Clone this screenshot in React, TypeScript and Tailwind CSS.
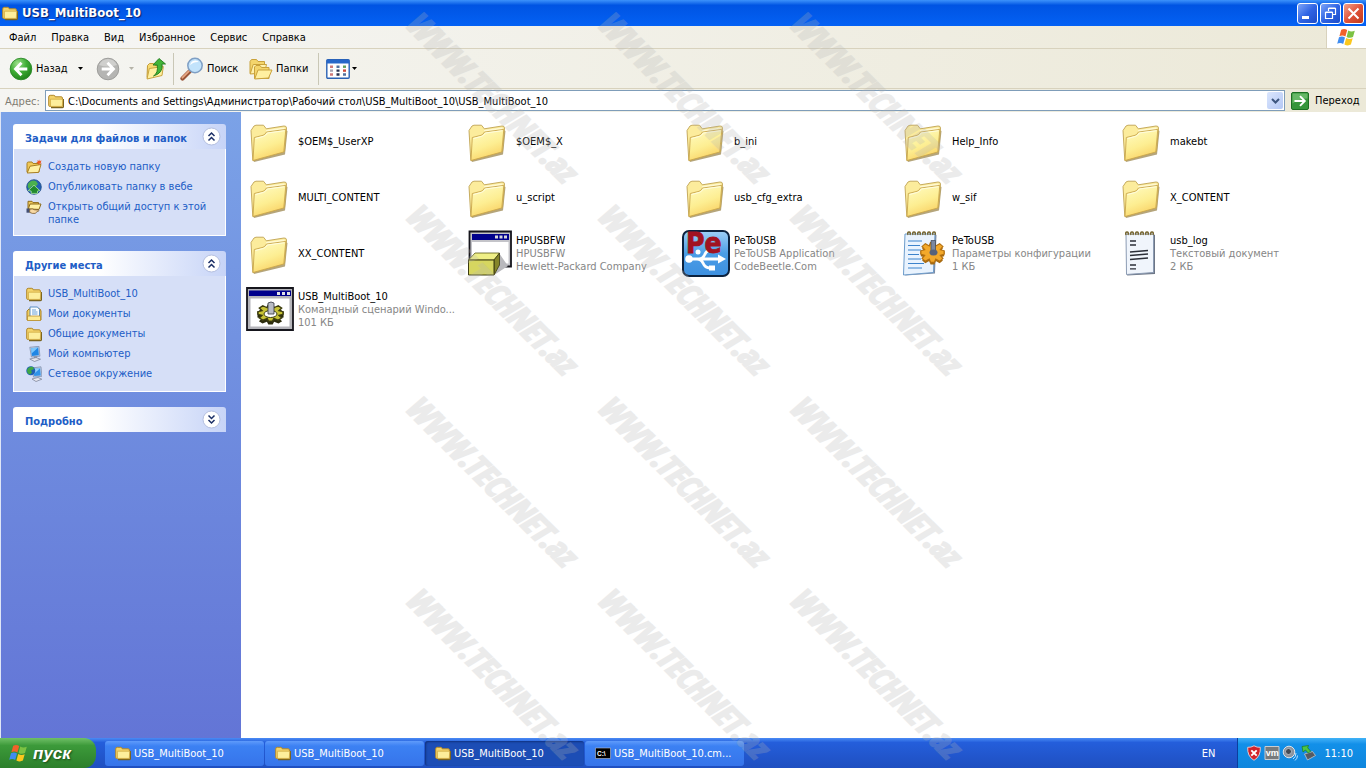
import React from "react";
import clsx from "clsx";

type IconProps = { className?: string };

const FolderLarge = () => (
  <svg viewBox="0 0 48 48" className="size-12 shrink-0" aria-hidden="true">
    <defs>
      <linearGradient id="folderFront" x1="0.2" y1="0" x2="0.6" y2="1">
        <stop offset="0" stopColor="#fffbc0" />
        <stop offset="0.55" stopColor="#fdee92" />
        <stop offset="1" stopColor="#f9d062" />
      </linearGradient>
    </defs>
    <path d="M8 45 L39 37.5 L41.5 14 L39.5 13 L37.5 35 L7 43Z" fill="#8d7434" opacity="0.65" />
    <path
      d="M5 13.5 L8 9 L10 8.2 L17.5 8.2 L20.3 11.8 L38 9 Q40.5 8.8 40.5 11 L38.5 34.5 L6.8 43.5Z"
      fill="#fcec9c"
      stroke="#bfa352"
      strokeWidth="0.9"
      strokeLinejoin="round"
    />
    <path d="M20 13 L38.5 10.5 L38.5 13 L21 15.5Z" fill="#fff9d2" />
    <path
      d="M8.3 20.5 L17 18.3 Q19 17.8 20.5 15 L39.8 12.4 L37.8 35 L7 43.5Z"
      fill="url(#folderFront)"
      stroke="#c9a64c"
      strokeWidth="0.9"
      strokeLinejoin="round"
    />
    <path d="M9.5 21.5 L17.5 19.4 Q20 18.5 21.3 16 L38.5 13.7" fill="none" stroke="#fffde0" strokeWidth="1" />
  </svg>
);

const FolderSmall = ({ className }: IconProps) => (
  <svg viewBox="0 0 16 16" className={clsx("size-4 shrink-0", className)} aria-hidden="true">
    <path d="M3 14.6h11.2q1.3 0 1.3-1.4V6" fill="none" stroke="#7a6420" strokeWidth="1.2" />
    <path
      d="M.7 12.5V4Q.7 2.3 2.2 2.3h3.6Q7 2.3 7.2 3.8h6q1.2 0 1.2 1.2v8.4H1.8Q.7 13.4.7 12.5Z"
      fill="#f3d36a"
      stroke="#b0872a"
    />
    <path d="M2.4 6.2h12.3l-.4 7.2H2.5Z" fill="#fdee9b" stroke="#cda53b" strokeWidth="0.7" />
  </svg>
);

const NewFolderIcon = () => (
  <svg viewBox="0 0 16 16" className="size-4 shrink-0" aria-hidden="true">
    <path d="M1 13V4.5Q1 3 2.5 3H6l1 1.5h6V13Z" fill="#f0c858" stroke="#a87f22" />
    <path d="M1.2 14 4 7.2 15 5.5 12.6 13.4Z" fill="#fff0a3" stroke="#a87f22" strokeLinejoin="round" />
    <path d="m13 .3.7 1.7 1.9-.6-.9 1.8 1 1.5-2-.2-1 1.4-.7-1.7-1.9-.4 1.6-1.1-.2-1.8 1.4 1Z" fill="#ee5a26" />
  </svg>
);

const WebPublishIcon = () => (
  <svg viewBox="0 0 16 16" className="size-4 shrink-0" aria-hidden="true">
    <circle cx="8" cy="8" r="7.3" fill="#2361b5" stroke="#1d4a82" strokeWidth="0.8" />
    <path d="M2 5q3-5 8-3l2 3-3 3-3-1-3 3q-2-2-1-5Z" fill="#4bb04d" />
    <path d="m8 6.2 5.8 5.4-2.3.4v2.4H5.2V12l-3-.4Z" fill="#218a2d" stroke="#aee6a0" strokeWidth="0.8" />
  </svg>
);

const ShareFolderIcon = () => (
  <svg viewBox="0 0 16 16" className="size-4 shrink-0" aria-hidden="true">
    <path d="M2 10V2.3h4l1 1.3h5.5V10Z" fill="#f0c858" stroke="#8c6b1d" />
    <path d="M2.3 10 4 5h11l-2 5.4Z" fill="#fff0a3" stroke="#8c6b1d" strokeLinejoin="round" />
    <path d="M.5 9.5h3.2v4.2H.5z" fill="#434f73" />
    <path d="M3.7 10.2q3-.8 5 .6l3.6.2q1 .6 0 1.4l-1.1.2-2 1.8H6.3l-2.6-1Z" fill="#f8d9a4" stroke="#6b4a1a" strokeWidth="0.7" />
  </svg>
);

const DocumentsIcon = () => (
  <svg viewBox="0 0 16 16" className="size-4 shrink-0" aria-hidden="true">
    <path d="M1 14V5l2-2h11l1 2v9Z" fill="#f0cd60" stroke="#a87f22" />
    <path d="M4 11V1h7.5L13.5 3.5V11Z" fill="#fafdff" stroke="#4d83bb" strokeWidth="0.9" />
    <path d="M6 4h4M6 6h5.5M6 8h5.5" stroke="#69a0d6" />
    <path d="M1.5 10h13v4.5h-13z" fill="#fdeb94" stroke="#b78d2b" strokeWidth="0.8" />
  </svg>
);

const ComputerIcon = () => (
  <svg viewBox="0 0 16 16" className="size-4 shrink-0" aria-hidden="true">
    <path d="m3.8 1.3 9.2-1 .9 9.9-8.5.8Z" fill="#c6d2e6" stroke="#7786a5" strokeWidth="0.7" />
    <path d="m4.9 2.3 7.3-.8.7 7.8-7 .7Z" fill="#1f86e4" />
    <path d="m4.9 2.3 7.3-.8-6.6 6Z" fill="#7cc6fb" />
    <path d="m7.8 10.5 3-.2.3 1.7H8Z" fill="#8790a3" />
    <path d="m3.8 13 6.2-1.4 4.5 1.6-6 2.3Z" fill="#e3e4ec" stroke="#737b90" strokeWidth="0.7" />
  </svg>
);

const NetworkIcon = () => (
  <svg viewBox="0 0 16 16" className="size-4 shrink-0" aria-hidden="true">
    <path d="m6 2 9-1.2.9 9.5-8.4.8Z" fill="#c6d2e6" stroke="#7786a5" strokeWidth="0.7" />
    <path d="m7.2 3 6.9-.8.7 7.2-6.6.6Z" fill="#2f92e9" />
    <path d="m7.2 3 6.9-.8-6 5.5Z" fill="#93d2fb" />
    <circle cx="4.8" cy="4.8" r="4.5" fill="#1f5fb4" />
    <path d="M1 4q2-4 6-3l1 2-3 1.5 1 2-2 2Q1 8 1 4Z" fill="#3fa746" />
    <path d="m6 13 6-1.5 3.8 1.7-5.8 2.3Z" fill="#e9e8f0" stroke="#737b90" strokeWidth="0.7" />
  </svg>
);

const WindowsFlag = ({ className }: IconProps) => (
  <svg viewBox="0 0 20 18" className={className} aria-hidden="true">
    <path d="M4.2 1.8q3-1.8 6 .2L8.4 8.4q-3-1.8-6-.2Z" fill="#f2622a" />
    <path d="M11.2 2.6q3 1.8 6.6.2L16 9q-3 1.6-6.4-.1Z" fill="#7cc243" />
    <path d="M2 9.3q3-1.6 6 .2l-1.8 6.4q-3-1.8-6-.2Z" fill="#3f8cf0" />
    <path d="M9.2 10q3.2 1.8 6.5.2L13.9 16.6q-3.2 1.7-6.5-.2Z" fill="#fbc71d" />
  </svg>
);

const BackIcon = () => (
  <svg viewBox="0 0 24 24" className="size-6" aria-hidden="true">
    <defs>
      <radialGradient id="backFill" cx="0.35" cy="0.25" r="0.8">
        <stop offset="0" stopColor="#9ee08c" />
        <stop offset="0.5" stopColor="#3fae35" />
        <stop offset="1" stopColor="#1f8119" />
      </radialGradient>
    </defs>
    <circle cx="12" cy="12" r="10.8" fill="url(#backFill)" stroke="#2b8a28" strokeWidth="0.9" />
    <path d="M12.5 5.8 6.5 12l6 6.2M7 12h11.3" fill="none" stroke="#fff" strokeWidth="2.8" />
  </svg>
);

const ForwardIcon = () => (
  <svg viewBox="0 0 24 24" className="size-6" aria-hidden="true">
    <circle cx="12" cy="12" r="10.8" fill="#b5b5b3" stroke="#999996" strokeWidth="0.9" />
    <path d="M3 8q3-6 9-6t9 6q-9 3-18 0Z" fill="#cfcfcd" />
    <path d="m11.5 5.8 6 6.2-6 6.2M17 12H5.7" fill="none" stroke="#fff" strokeWidth="2.8" />
  </svg>
);

const UpIcon = () => (
  <svg viewBox="0 0 24 24" className="size-6" aria-hidden="true">
    <path d="m3 20.5.5-12 2-2h4l1.5 2 7-.5-1 9Z" fill="#f6d970" stroke="#c29b38" strokeLinejoin="round" />
    <path d="m3 22 2.3-10.5 14-2-1.3 9Z" fill="#fff0a0" stroke="#c9a440" strokeLinejoin="round" />
    <path d="M9.5 19q5-3 3.7-11H9l6-6.5L21.5 7H18q1.5 9-8.5 12Z" fill="#43b438" stroke="#207a1d" strokeWidth="0.9" />
  </svg>
);

const SearchIcon = () => (
  <svg viewBox="0 0 24 24" className="size-6" aria-hidden="true">
    <path d="m2.5 21.5 7-7" stroke="#9a5538" strokeWidth="4.2" strokeLinecap="round" />
    <path d="m2.4 20.7 6.5-6.5" stroke="#e7a884" strokeWidth="1.8" strokeLinecap="round" />
    <circle cx="15" cy="8.5" r="7.2" fill="#c2e3fb" stroke="#7f9fc4" strokeWidth="1.5" />
    <path d="M10.2 8.2q.6-4.4 5-4.7 2.5 0 3.5 1.5-5.5-.2-8.5 3.2Z" fill="#fff" />
  </svg>
);

const FoldersIcon = () => (
  <svg viewBox="0 0 24 24" className="size-6" aria-hidden="true">
    <path d="M1 16.5V4.5L2.5 2.5H7.5l1.5 2h6.5V15Z" fill="#f4d56c" stroke="#c9a23c" />
    <path d="m1.2 17 3-9.5H17.5l-2 8.5Z" fill="#fff2ae" stroke="#c9a23c" strokeLinejoin="round" />
    <path d="M5.5 21.5V10l1.5-1.5h4l1.5 2h7.5v11Z" fill="#f4d56c" stroke="#c9a23c" />
    <path d="M5.7 22 9 13h14L19.5 21Z" fill="#fff0a0" stroke="#c9a23c" strokeLinejoin="round" />
  </svg>
);

const ViewsIcon = () => (
  <svg viewBox="0 0 24 20" className="h-5 w-6" aria-hidden="true">
    <rect x="0.8" y="0.8" width="22.4" height="18.4" rx="1" fill="#fff" stroke="#2b62b4" strokeWidth="1.4" />
    <path d="M.8.8h22.4v3.7H.8z" fill="#2767c9" />
    <path d="M4 6.5h3v2.4H4zM4 14.3h3v2.4H4z" fill="#d07a7a" />
    <path d="M10.5 6.5h3v2.4h-3zM17 14.3h3v2.4h-3z" fill="#52719e" />
    <path d="M17 6.5h3v2.4h-3z" fill="#62a05a" />
    <path d="M4 10.4h3v2.4H4z" fill="#a8a4b4" />
    <path d="M10.5 10.4h3v2.4h-3zM10.5 14.3h3v2.4h-3z" fill="#27304f" />
    <path d="M17 10.4h3v2.4h-3z" fill="#cc4b3c" />
  </svg>
);

const Caret = ({ className }: IconProps) => (
  <svg viewBox="0 0 5 3" className={clsx("h-[3px] w-[5px]", className)} aria-hidden="true">
    <path d="M0 0h5L2.5 3Z" fill="currentColor" />
  </svg>
);

const GoIcon = () => (
  <svg viewBox="0 0 18 18" className="size-[18px]" aria-hidden="true">
    <rect x="0.5" y="0.5" width="17" height="17" rx="1.5" fill="#36953b" stroke="#1c7022" />
    <path d="M1.5 1.5h15v5q-8 0-15 5Z" fill="#66b866" />
    <path d="M9 4.2 13.8 9 9 13.8M13 9H3.5" fill="none" stroke="#fff" strokeWidth="1.9" />
  </svg>
);

// teeth shared by the batch and config icons
const GEAR_TEETH =
  "M-1.5-9h3l1 3 3-2 2.5 2.5-2 3 3 1v3l-3 1 2 3-2.5 2.5-3-2-1 3h-3l-1-3-3 2L-8 5.5l2-3-3-1v-3l3-1-2-3L-5.5-8l3 2Z";

const InstallerIcon = () => (
  <svg viewBox="0 0 48 48" className="size-12 shrink-0" aria-hidden="true">
    <path d="M5.5 2.5h41.5v35H5.5z" fill="#c4c4c9" stroke="#15151c" strokeWidth="1.8" />
    <path d="M8 5h37v6H8z" fill="#00008c" />
    <path d="M31 6.5h3v3h-3zM35.5 6.5h3v3h-3zM40 6.5h3v3h-3z" fill="#d6d6da" />
    <path d="M8 13h36.5v21.5H8z" fill="#fff" />
    <path d="m30 46 5-11V24l9 13Z" fill="#b9b9bd" />
    <path d="M4.5 31 11 24h24.5L30 31Z" fill="#efef86" stroke="#5c5c16" strokeWidth="0.8" />
    <path d="M30 31 35.5 24v12L30 46Z" fill="#85852a" stroke="#3b3b10" strokeWidth="0.8" />
    <path d="M4.5 31H30v15H4.5z" fill="#d6d660" stroke="#3b3b10" />
  </svg>
);

const BatchIcon = () => (
  <svg viewBox="0 0 48 48" className="size-12 shrink-0" aria-hidden="true">
    <path d="M1 3h46v42H1z" fill="#b5b5ba" stroke="#15151c" strokeWidth="1.8" />
    <path d="M3 5.5h42v5.500H3z" fill="#00008c" />
    <path d="M31 7h3v3h-3zM36 7h3v3h-3zM41 7h3v3h-3z" fill="#e2e2e8" />
    <path d="M4.5 13.5h39v28h-39z" fill="#fff" />
    <g transform="translate(24.5 28)">
      <path d={GEAR_TEETH} fill="#2d2d0d" transform="translate(0 3) scale(1.45 0.95)" />
      <path d={GEAR_TEETH} fill="#c8c335" stroke="#3e3e10" strokeWidth="1.2" transform="scale(1.4 0.9)" />
      <ellipse cx="0" cy="1" rx="6.5" ry="3.5" fill="#fff" stroke="#3e3e10" />
      <path d="M-2.5-10q3-2 6 0V1h-6z" fill="#b9bcc4" stroke="#33363f" strokeWidth="0.8" />
    </g>
  </svg>
);

const PeToUsbIcon = () => (
  <svg viewBox="0 0 48 48" className="size-12 shrink-0" aria-hidden="true">
    <defs>
      <linearGradient id="peFill" x1="0" y1="0" x2="0" y2="1">
        <stop offset="0" stopColor="#9fd0f7" />
        <stop offset="0.5" stopColor="#4b9de6" />
        <stop offset="1" stopColor="#3d90e0" />
      </linearGradient>
    </defs>
    <rect x="1" y="2" width="46" height="45" rx="6" fill="url(#peFill)" stroke="#0c2340" strokeWidth="2" />
    <path d="M5 30h34M15 30q4 0 6 4 2 5 7 5h3M17 30q4 0 6-5 2-4 6-4" fill="none" stroke="#fff" strokeWidth="2.8" />
    <path d="m36 25.5 8 4.5-8 4.5Z" fill="#fff" />
    <circle cx="7" cy="30" r="3.8" fill="#fff" />
    <circle cx="16" cy="23" r="2.5" fill="#fff" />
    <rect x="27" y="36.5" width="6" height="5" fill="#fff" />
    <text x="4" y="24" fontFamily="DejaVu Sans Condensed" fontWeight="700" fontSize="28" fill="#a11221" stroke="#a11221" strokeWidth="0.8">
      Pe
    </text>
  </svg>
);

const SpiralTop = () => (
  <path
    d="M8 6q-1-3 1-3t1 3M13 6q-1-3 1-3t1 3M18 6q-1-3 1-3t1 3M23 6q-1-3 1-3t1 3M28 6q-1-3 1-3t1 3M33 6q-1-3 1-3t1 3"
    fill="none"
    stroke="#76652f"
    strokeWidth="1.4"
  />
);

const ConfigIcon = () => (
  <svg viewBox="0 0 48 48" className="size-12 shrink-0" aria-hidden="true">
    <path d="M5 46.5 35 44.5 36.5 6 35 5Z" fill="#7d8ba3" />
    <path d="M5 5h30L33.5 43.5 3.5 46Z" fill="#e9f3fe" stroke="#6d9ccb" />
    <path d="M8 12h14M8 16.5h12M8 21h13M8 25.5h11M8 30h13M8 34.5h16M8 39h14" stroke="#3c83cc" strokeWidth="1.2" />
    <SpiralTop />
    <g transform="translate(32.5 23.5)">
      <path d={GEAR_TEETH} fill="#a56a12" transform="translate(0 2) scale(1.3 1.1)" />
      <path d={GEAR_TEETH} fill="#f3a92b" stroke="#b4700f" transform="scale(1.3 1.1)" />
      <path d="M-1.5-12h4.5v11h-4.5z" fill="#7b88a0" stroke="#3e4658" strokeWidth="0.7" />
      <ellipse cx="1" cy="0" rx="4" ry="3" fill="#57627a" />
    </g>
  </svg>
);

const TextIcon = () => (
  <svg viewBox="0 0 48 48" className="size-12 shrink-0" aria-hidden="true">
    <path d="M9 46.5 37 45V6l-2-1Z" fill="#6d7686" />
    <path d="M8 5h27.5v38.5L8.5 45.5Z" fill="#f0f5fc" stroke="#8b9bb3" />
    <path d="M12 12h6M12 16h6M12 23l18-1.5M12 26.5l18-1.5M12 30.5l18-1.5M12 36h6M12 39.8h6" stroke="#2b2f38" strokeWidth="1.3" />
    <SpiralTop />
  </svg>
);

const FILES = [
  { name: "$OEM$_UserXP" },
  { name: "$OEM$_X" },
  { name: "b_ini" },
  { name: "Help_Info" },
  { name: "makebt" },
  { name: "MULTI_CONTENT" },
  { name: "u_script" },
  { name: "usb_cfg_extra" },
  { name: "w_sif" },
  { name: "X_CONTENT" },
  { name: "XX_CONTENT" },
  { name: "HPUSBFW", info: ["HPUSBFW", "Hewlett-Packard Company"], icon: InstallerIcon },
  { name: "PeToUSB", info: ["PeToUSB Application", "CodeBeetle.Com"], icon: PeToUsbIcon },
  { name: "PeToUSB", info: ["Параметры конфигурации", "1 КБ"], icon: ConfigIcon },
  { name: "usb_log", info: ["Текстовый документ", "2 КБ"], icon: TextIcon },
  { name: "USB_MultiBoot_10", info: ["Командный сценарий Windo...", "101 КБ"], icon: BatchIcon },
];

const TASKS = [
  { label: "Создать новую папку", icon: NewFolderIcon },
  { label: "Опубликовать папку в вебе", icon: WebPublishIcon },
  { label: "Открыть общий доступ к этой папке", icon: ShareFolderIcon },
];

const PLACES = [
  { label: "USB_MultiBoot_10", icon: FolderSmall },
  { label: "Мои документы", icon: DocumentsIcon },
  { label: "Общие документы", icon: FolderSmall },
  { label: "Мой компьютер", icon: ComputerIcon },
  { label: "Сетевое окружение", icon: NetworkIcon },
];

const MENU = ["Файл", "Правка", "Вид", "Избранное", "Сервис", "Справка"];

const WINDOWS = [
  { label: "USB_MultiBoot_10" },
  { label: "USB_MultiBoot_10" },
  { label: "USB_MultiBoot_10", active: true },
  { label: "USB_MultiBoot_10.cm...", console: true },
];

type PanelItem = { label: string; icon: React.ComponentType };

const Panel = ({ title, items }: { title: string; items?: PanelItem[] }) => (
  <section>
    <button
      type="button"
      className="flex h-[25px] w-full items-center justify-between rounded-t-[3px] bg-linear-to-r from-white from-40% to-[#c7d4f7] pr-[5px] pl-3 font-bold text-[#215dc6]"
    >
      <span className="pt-1">{title}</span>
      <svg viewBox="0 0 19 19" className={clsx("size-[19px]", !items && "rotate-180")} aria-hidden="true">
        <circle cx="9.5" cy="9.5" r="8.5" fill="#fff" stroke="#b4bfdf" />
        <path d="m6.5 9 3-3 3 3m-6 4.5 3-3 3 3" fill="none" stroke="#1b2f66" strokeWidth="1.5" />
      </svg>
    </button>
    {items && (
      <ul className="flex flex-col gap-1 border border-t-0 border-white bg-[#d6dff7] pt-[10px] pr-2 pb-[9px] pl-3">
        {items.map(({ label, icon: Icon }) => (
          <li key={label}>
            <a href="#" className="flex items-start gap-[6px] leading-[13px] text-[#215dc6]">
              <Icon />
              <span className="pt-px">{label}</span>
            </a>
          </li>
        ))}
      </ul>
    )}
  </section>
);

const CaptionButton = ({ label, danger, children }: { label: string; danger?: boolean; children: React.ReactNode }) => (
  <button
    type="button"
    aria-label={label}
    className={clsx(
      "size-[21px] rounded-[3px] border border-white",
      danger
        ? "bg-linear-to-br from-[#f0a08a] via-[#e0533a] to-[#c03a1a]"
        : "bg-linear-to-br from-[#7ea4f8] via-[#3064e4] to-[#1c4cc8]",
    )}
  >
    <svg viewBox="0 0 19 19" className="size-[19px]" fill="none" stroke="#fff" aria-hidden="true">
      {children}
    </svg>
  </button>
);

const Separator = () => <span className="h-8 w-px bg-[#c9c7b6]" />;

const Watermarks = () => (
  <div className="pointer-events-none absolute inset-0 flex justify-center overflow-hidden" aria-hidden="true">
    <div className="grid h-fit auto-rows-[192px] grid-cols-[repeat(3,192px)]">
      {Array.from({ length: 12 }, (_, i) => (
        <div key={i} className="flex items-center justify-center">
          <span className="rotate-45 font-['Open_Sans_Condensed','Roboto_Condensed','Liberation_Sans',sans-serif] text-[32px] leading-none font-extrabold whitespace-nowrap text-[#b4b4b4] italic opacity-25 [-webkit-text-stroke:2px_#b4b4b4]">
            WWW.TECHNET.az
          </span>
        </div>
      ))}
    </div>
  </div>
);

export default function App() {
  return (
    <div className="relative flex min-h-screen flex-col bg-white font-['DejaVu_Sans_Condensed','DejaVu_Sans',sans-serif] text-[11px] leading-[13px] text-black">
      <header className="flex h-[26px] items-center bg-linear-to-b from-[#3c92fb] via-[#0054e3] via-20% to-[#0461f4] pr-[2px] pl-[2px]">
        <FolderSmall />
        <h1 className="grow pl-1 text-[13px] leading-4 font-bold text-white [text-shadow:1px_1px_1px_#0a1f6b]">
          USB_MultiBoot_10
        </h1>
        <div className="flex gap-[2px]">
          <CaptionButton label="Свернуть">
            <path d="M4 13.5h7" strokeWidth="3" />
          </CaptionButton>
          <CaptionButton label="Восстановить">
            <path d="M7.5 7V4.5h7v6H12M4.5 8.5h7v6h-7zM4.5 8h7M7.5 4h7" strokeWidth="1.2" />
          </CaptionButton>
          <CaptionButton label="Закрыть" danger>
            <path d="m4.5 4.5 10 10m0-10-10 10" strokeWidth="2" />
          </CaptionButton>
        </div>
      </header>

      <nav className="flex h-[23px] items-stretch justify-between border-b border-[#d8d2bd] bg-linear-to-r from-[#f6f6f5] to-[#ece9d8]">
        <ul className="flex items-center gap-[15px] pl-[9px]">
          {MENU.map((item) => (
            <li key={item}>
              <button type="button">{item}</button>
            </li>
          ))}
        </ul>
        <div className="flex w-10 items-center justify-center border-l border-[#d8d2bd] bg-white">
          <WindowsFlag className="h-[18px] w-5" />
        </div>
      </nav>

      <div className="flex h-[40px] items-center border-b border-[#d8d2bd] bg-linear-to-r from-[#f5f5f2] to-[#ece9d8] pl-[9px]">
        <button type="button" className="flex items-center gap-[3px]">
          <BackIcon />
          <span className="w-[38px] text-left">Назад</span>
          <Caret className="ml-px" />
        </button>
        <button type="button" aria-label="Вперед" className="ml-[13px] flex items-center gap-[9px] text-[#b5b3a8]">
          <ForwardIcon />
          <Caret />
        </button>
        <button type="button" aria-label="Вверх" className="mr-[5px] ml-[10px]">
          <UpIcon />
        </button>
        <Separator />
        <button type="button" className="ml-[6px] flex items-center gap-[3px]">
          <SearchIcon />
          <span className="w-8 text-left">Поиск</span>
        </button>
        <button type="button" className="mx-[10px] flex items-center gap-[3px]">
          <FoldersIcon />
          <span className="w-8 text-left">Папки</span>
        </button>
        <Separator />
        <button type="button" aria-label="Вид" className="ml-[7px] flex items-center gap-[2px]">
          <ViewsIcon />
          <Caret />
        </button>
      </div>

      <form className="flex h-[23px] items-center bg-linear-to-r from-[#f5f5f2] to-[#ece9d8] pr-1 pl-[5px]">
        <label htmlFor="address" className="w-10 pt-px text-[#7f7c73]">
          Адрес:
        </label>
        <div className="flex h-[21px] grow items-center border border-[#7f9db9] bg-white pr-px pl-[2px]">
          <FolderSmall />
          <input
            id="address"
            className="h-full grow bg-transparent pt-[2px] pl-1 outline-none"
            defaultValue="C:\Documents and Settings\Администратор\Рабочий стол\USB_MultiBoot_10\USB_MultiBoot_10"
          />
          <button
            type="button"
            aria-label="Показать список"
            className="flex h-[17px] w-4 items-center justify-center rounded-[2px] bg-linear-to-br from-[#dbe6fd] to-[#b4c8f5]"
          >
            <svg viewBox="0 0 9 6" className="h-[6px] w-[9px]" aria-hidden="true">
              <path d="m1 1 3.5 3.5L8 1" fill="none" stroke="#3d567f" strokeWidth="2" />
            </svg>
          </button>
        </div>
        <button type="button" className="ml-[6px] flex items-center gap-[6px]">
          <GoIcon />
          <span className="w-[47px] text-left">Переход</span>
        </button>
      </form>

      <main className="flex grow border-l border-[#dfe6f6]">
        <aside className="flex w-[240px] shrink-0 flex-col gap-[15px] bg-linear-to-b from-[#7ba2e7] to-[#6375d6] pt-3 pr-[15px] pl-3">
          <Panel title="Задачи для файлов и папок" items={TASKS} />
          <Panel title="Другие места" items={PLACES} />
          <Panel title="Подробно" />
        </aside>
        <ul className="grid grow auto-rows-[56px] grid-cols-[repeat(auto-fill,218px)] content-start pt-px pl-[5px]">
          {FILES.map(({ name, info, icon: Icon = FolderLarge }, i) => (
            <li key={i} className="flex items-center gap-1">
              <Icon />
              <div className="whitespace-nowrap">
                <p>{name}</p>
                {info?.map((line) => (
                  <p key={line} className="text-[#868686]">
                    {line}
                  </p>
                ))}
              </div>
            </li>
          ))}
        </ul>
      </main>

      <footer className="flex h-[30px] items-stretch bg-linear-to-b from-[#4a8bf5] via-[#245edb] via-15% to-[#1f4fc0] text-white">
        <button
          type="button"
          className="flex w-24 items-center gap-1 rounded-r-xl bg-linear-to-b from-[#6fc067] via-[#3c9a3a] via-25% to-[#2c7f2b] pl-[9px] font-['Liberation_Sans',sans-serif] text-[17px] font-bold italic [text-shadow:1px_1px_2px_#1b4a1a]"
        >
          <WindowsFlag className="h-[18px] w-5" />
          пуск
        </button>
        <div className="flex grow items-center gap-px pl-[9px]">
          {WINDOWS.map((win, i) => (
            <button
              key={i}
              type="button"
              className={clsx(
                "flex h-[25px] w-[159px] items-center gap-[3px] rounded-[3px] pl-[10px]",
                win.active
                  ? "bg-[#1c4db5] shadow-[inset_1px_1px_2px_#10317e]"
                  : "bg-linear-to-b from-[#5f9bfb] via-[#3c81f3] via-20% to-[#3674ea]",
              )}
            >
              {win.console ? (
                <svg viewBox="0 0 16 16" className="size-4 shrink-0" aria-hidden="true">
                  <path d="M.5 3h15v10.5H.5z" fill="#000" stroke="#b8bfd0" strokeWidth="0.6" />
                  <text x="2" y="10.5" fontSize="6.5" fontWeight="700" fontFamily="Liberation Sans" fill="#fff">
                    C:\
                  </text>
                </svg>
              ) : (
                <FolderSmall />
              )}
              {win.label}
            </button>
          ))}
        </div>
        <div className="flex items-center pr-[22px]">EN</div>
        <div className="flex items-center gap-[2px] border-l border-[#0a3f9e] bg-linear-to-b from-[#3fb2f7] via-[#1290e9] via-20% to-[#0f86dd] pr-[13px] pl-2">
          <svg viewBox="0 0 16 16" className="size-4" aria-hidden="true">
            <path d="M8 .8q3 1.8 6.3 1.5.6 9-6.3 13Q1.1 11.3 1.7 2.3 5 2.6 8 .8Z" fill="#d3222a" stroke="#f0d0d0" strokeWidth="0.9" />
            <path d="m5.3 5.3 5.4 5.4m0-5.4-5.4 5.4" stroke="#fff" strokeWidth="1.9" />
          </svg>
          <svg viewBox="0 0 16 16" className="size-4" aria-hidden="true">
            <path d="M1 1.5h14v13H1z" fill="#777a7c" stroke="#c9ccd0" />
            <text x="1.8" y="11" fontSize="9" fontWeight="700" fontFamily="Liberation Sans" fill="#fff">
              vm
            </text>
          </svg>
          <svg viewBox="0 0 16 16" className="size-4" aria-hidden="true">
            <circle cx="7" cy="7" r="5.8" fill="#8c949f" stroke="#dfe3e8" />
            <circle cx="6.5" cy="6.5" r="3" fill="#434a55" stroke="#c4c9cf" strokeWidth="0.8" />
            <path d="M11 14q3-2 3-6M13 15.5q2.5-2 2.5-5" fill="none" stroke="#bfe2ff" />
          </svg>
          <svg viewBox="0 0 16 16" className="size-4" aria-hidden="true">
            <path d="m4.5 9 8-2.5 3 4-8 4.5Z" fill="#545b63" stroke="#c2c8cd" strokeWidth="0.8" />
            <path d="m2 1.5 6.5-1-.8 2.3 3 3.5-2.5 1.7-2.7-3L3 7Z" fill="#4cc545" stroke="#1d7a1c" strokeWidth="0.7" />
          </svg>
          <time className="pl-[6px]">11:10</time>
        </div>
      </footer>

      <Watermarks />
    </div>
  );
}
